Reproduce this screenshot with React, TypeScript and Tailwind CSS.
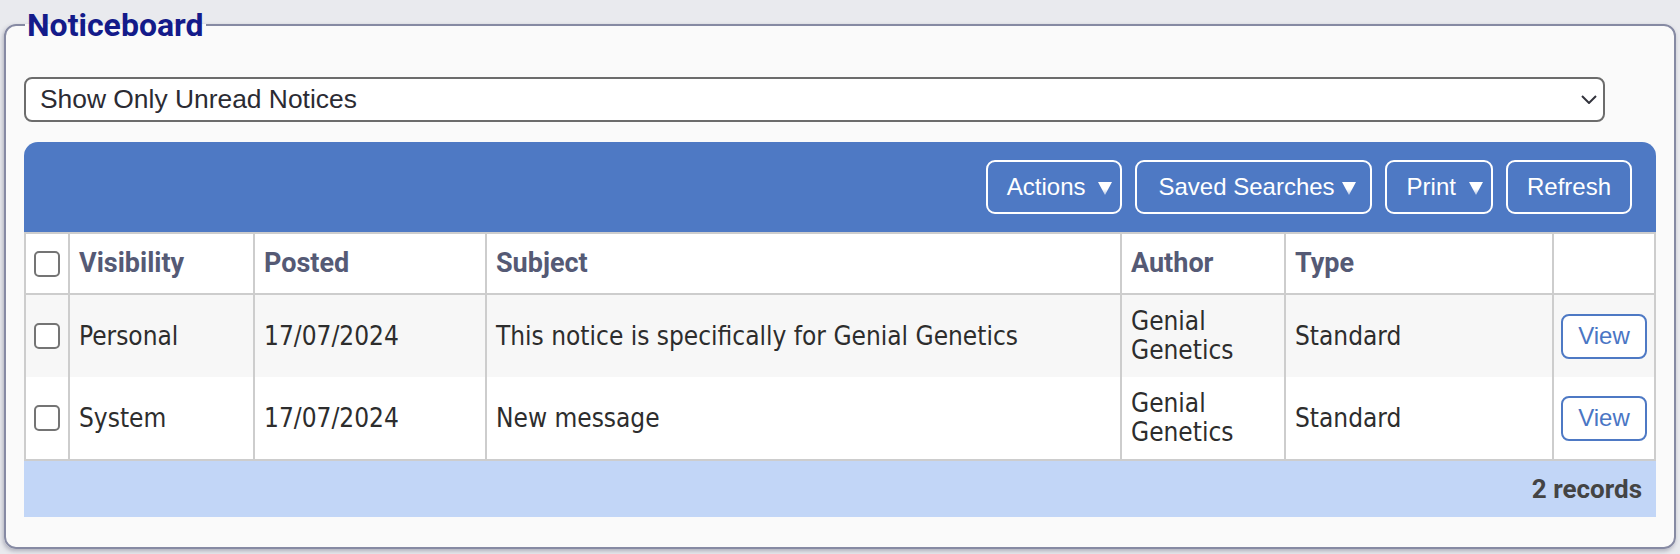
import React from "react";

const rows = [
  {
    vis: "Personal",
    posted: "17/07/2024",
    subject: "This notice is specifically for Genial Genetics",
    author: "Genial Genetics",
    type: "Standard",
    bg: "bg-[#f7f7f7]",
  },
  {
    vis: "System",
    posted: "17/07/2024",
    subject: "New message",
    author: "Genial Genetics",
    type: "Standard",
    bg: "bg-white",
  },
];

function Tri() {
  return (
    <svg width="14" height="13" viewBox="0 0 14 13" className="block">
      <defs>
        <linearGradient id="tg" x1="0" y1="0" x2="0" y2="1">
          <stop offset="0" stopColor="#ffffff" />
          <stop offset="0.55" stopColor="#ffffff" />
          <stop offset="1" stopColor="#ffffff" stopOpacity="0.55" />
        </linearGradient>
      </defs>
      <polygon points="0,0 14,0 7,13" fill="url(#tg)" />
    </svg>
  );
}

function Check() {
  return (
    <input
      type="checkbox"
      className="block mx-auto appearance-none w-[26px] h-[26px] rounded-[5px] border-2 border-[#747474] bg-white"
    />
  );
}

const sans = "font-['Liberation_Sans',Arial,sans-serif]";
const roboto = "font-['Roboto',sans-serif]";
const body = "font-['DejaVu_Sans_Condensed','DejaVu_Sans',sans-serif] font-stretch-condensed";

export default function App() {
  return (
    <div className="h-[554px] overflow-hidden bg-[#e9eaee] pt-[9px]">
      <fieldset className="mx-[4px] rounded-[12px] border-2 border-[#868aa3] bg-[#fafafa] px-[18px] pt-[36px] pb-[30px] shadow-[-1px_2px_4px_rgba(60,60,90,0.35)]">
        <legend
          className={`ml-[1px] px-[2px] text-[32px] leading-[32px] font-bold text-[#141b8a] ${roboto}`}
        >
          Noticeboard
        </legend>

        <div className="relative w-[1581px]">
          <select
            className={`block w-full h-[45px] appearance-none rounded-[8px] border-2 border-[#6c6c6c] bg-white pl-[14px] text-[26.4px] text-[#2b2b33] ${sans}`}
            defaultValue="unread"
          >
            <option value="unread">Show Only Unread Notices</option>
            <option value="all">Show All Notices</option>
          </select>
          <svg
            width="16"
            height="9"
            viewBox="0 0 16 9"
            className="pointer-events-none absolute right-[8px] top-[18px]"
          >
            <path d="M1 1 L8 8 L15 1" fill="none" stroke="#33343d" strokeWidth="2" />
          </svg>
        </div>

        <div className="mt-[20px] h-[90px] rounded-t-[14px] bg-[#4e79c4] flex items-center justify-end gap-[13px] pr-[24px]">
          <button
            className={`h-[54px] flex items-center rounded-[9px] border-2 border-white pl-[19px] pr-[8px] text-[24px] text-white ${sans}`}
          >
            <span>Actions</span>
            <span className="ml-[13px] mt-[3px]">
              <Tri />
            </span>
          </button>
          <button
            className={`h-[54px] flex items-center rounded-[9px] border-2 border-white pl-[21px] pr-[14px] text-[24px] text-white ${sans}`}
          >
            <span>Saved Searches</span>
            <span className="ml-[7px] mt-[3px]">
              <Tri />
            </span>
          </button>
          <button
            className={`h-[54px] flex items-center rounded-[9px] border-2 border-white pl-[20px] pr-[8px] text-[24px] text-white ${sans}`}
          >
            <span>Print</span>
            <span className="ml-[13px] mt-[3px]">
              <Tri />
            </span>
          </button>
          <button
            className={`h-[54px] flex items-center rounded-[9px] border-2 border-white px-[19px] text-[24px] text-white ${sans}`}
          >
            Refresh
          </button>
        </div>

        <table className="w-full table-fixed border-collapse">
          <colgroup>
            <col className="w-[44px]" />
            <col className="w-[185px]" />
            <col className="w-[232px]" />
            <col className="w-[635px]" />
            <col className="w-[164px]" />
            <col className="w-[268px]" />
            <col />
          </colgroup>
          <thead>
            <tr className="bg-white">
              <th className="h-[61px] border-2 border-[#cdcdcd] align-middle">
                <Check />
              </th>
              {["Visibility", "Posted", "Subject", "Author", "Type", ""].map((h, i) => (
                <th
                  key={i}
                  className={`h-[61px] border-2 border-[#cdcdcd] px-[9px] text-left align-middle text-[27px] font-bold text-[#555a75] ${roboto}`}
                >
                  {h}
                </th>
              ))}
            </tr>
          </thead>
          <tbody>
            {rows.map((r, i) => (
              <tr key={i} className={r.bg}>
                <td
                  className={`border-x-2 border-[#cdcdcd] align-middle ${
                    i === rows.length - 1 ? "border-b-2" : ""
                  }`}
                >
                  <Check />
                </td>
                {[r.vis, r.posted, r.subject, r.author, r.type].map((c, j) => (
                  <td
                    key={j}
                    className={`border-x-2 border-[#cdcdcd] px-[9px] py-[12px] align-middle text-[26px] leading-[29px] text-[#2d2d2d] ${body} ${
                      i === rows.length - 1 ? "border-b-2" : ""
                    }`}
                  >
                    {c}
                  </td>
                ))}
                <td
                  className={`border-x-2 border-[#cdcdcd] px-[6px] align-middle text-center ${
                    i === rows.length - 1 ? "border-b-2" : ""
                  }`}
                >
                  <button
                    className={`h-[45px] rounded-[8px] border-2 border-[#4e79c4] bg-white px-[15px] text-[24px] text-[#4a76c4] ${sans}`}
                  >
                    View
                  </button>
                </td>
              </tr>
            ))}
          </tbody>
        </table>

        <div
          className={`h-[56px] bg-[#c2d6f7] flex items-center justify-end pr-[14px] text-[26px] font-bold text-[#444444] ${roboto}`}
        >
          2 records
        </div>
      </fieldset>
    </div>
  );
}
